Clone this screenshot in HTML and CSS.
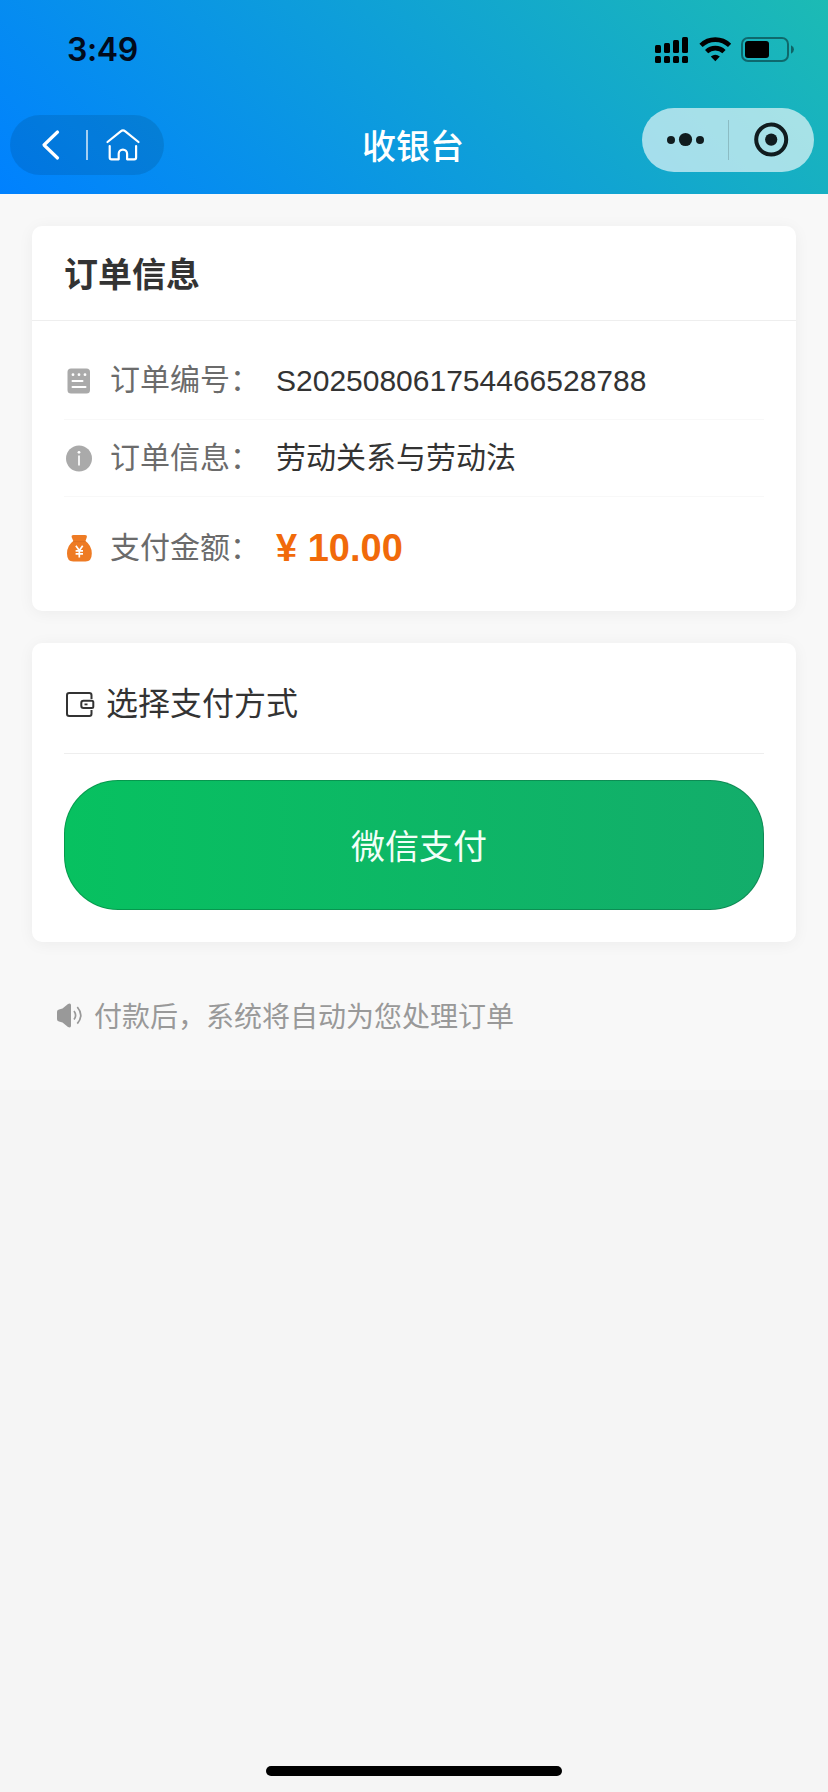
FILE: index.html
```html
<!DOCTYPE html>
<html lang="zh-CN">
<head>
<meta charset="utf-8">
<title>收银台</title>
<link rel="stylesheet" href="styles.css">
</head>
<body>
<div class="screen">
  <header class="header">
    <div class="status">
      <span class="time">3:49</span>
      <svg class="indicators" width="142" height="30" viewBox="0 0 142 30">
        <g>
          <rect x="1" y="11" width="6" height="8" rx="1.5"/><rect x="10" y="9" width="6" height="10" rx="1.5"/><rect x="19" y="6" width="6" height="13" rx="1.5"/><rect x="28" y="3" width="6" height="16" rx="1.5"/>
          <rect x="1" y="22" width="6" height="7" rx="1.5"/><rect x="10" y="22" width="6" height="7" rx="1.5"/><rect x="19" y="22" width="6" height="7" rx="1.5"/><rect x="28" y="22" width="6" height="7" rx="1.5"/>
        </g>
        <g fill="none" stroke="#000" stroke-width="4.6">
          <path d="M47 11.4a20.6 20.6 0 0 1 28.600 0"/>
          <path d="M52.600 17.600a12.600 12.600 0 0 1 17.400 0"/>
        </g>
        <path d="M56.800 22.600q4.500-3.600 9 0l-4.500 4.600z"/>
        <rect x="88" y="4" width="46" height="23" rx="6" fill="none" stroke="#000" stroke-opacity=".42" stroke-width="2"/>
        <rect x="91" y="7" width="24" height="17" rx="3"/>
        <path d="M137 11.300q3 1.500 3 4.200t-3 4.200z" fill-opacity=".45"/>
      </svg>
    </div>
    <nav class="nav">
      <div class="back-capsule">
        <svg width="154" height="60" viewBox="0 0 154 60" fill="none" stroke="#fff" stroke-linecap="round" stroke-linejoin="round">
          <path d="M47.500 17 34 30l13.500 13" stroke-width="3.200"/>
          <path d="M77 15v30" stroke-width="1.600" stroke-linecap="butt" stroke-opacity=".8"/>
          <path d="M97.500 27 110.700 16.300q2.300-1.900 4.600 0L128.500 27M99.700 31v11.500q0 1.800 1.800 1.800h7.200v-5.500a4.200 4.200 0 0 1 8.400 0v5.500h7.200q1.800 0 1.800-1.800V31" stroke-width="2.200"/>
        </svg>
      </div>
      <h1 class="page-title">收银台</h1>
      <div class="menu-capsule">
        <svg width="172" height="64" viewBox="0 0 172 64" fill="#101c1f">
          <circle cx="29" cy="32" r="4"/><circle cx="43.500" cy="31.500" r="6.600"/><circle cx="58" cy="32" r="4"/>
          <path d="M86.500 12v40" stroke="#000" stroke-opacity=".16" stroke-width="1"/>
          <circle cx="129.200" cy="31.600" r="15" fill="none" stroke="#101c1f" stroke-width="4"/>
          <circle cx="129.200" cy="31.600" r="6.100"/>
        </svg>
      </div>
    </nav>
  </header>

  <main class="content">
    <section class="card">
      <h2 class="card-title">订单信息</h2>
      <div class="rows">
        <div class="row">
          <svg class="icon" width="28" height="30" viewBox="0 0 28 30">
            <rect x="3.500" y="3.500" width="22.500" height="25" rx="3.500" fill="#aaa"/>
            <g fill="#fff"><circle cx="9" cy="9.700" r="1.400"/><circle cx="15" cy="9.700" r="1.400"/><circle cx="21" cy="9.700" r="1.400"/></g>
            <path d="M8.500 16h10M8.500 22h13" stroke="#fff" stroke-width="2" stroke-linecap="round"/>
          </svg>
          <span class="label">订单编号：</span><span class="value number">S202508061754466528788</span>
        </div>
        <div class="row">
          <svg class="icon" width="28" height="30" viewBox="0 0 28 30">
            <circle cx="15" cy="15.500" r="13" fill="#aaa"/>
            <circle cx="15" cy="9.300" r="1.400" fill="#fff"/>
            <path d="M15 12.500v10" stroke="#fff" stroke-width="1.700"/>
          </svg>
          <span class="label">订单信息：</span><span class="value">劳动关系与劳动法</span>
        </div>
        <div class="row row-amount">
          <svg class="icon" width="28" height="30" viewBox="0 0 28 30">
            <path d="M9.500 2h11.500q2.300 0 1.800 2.300L21.500 8q6.300 4.500 6.300 12.500 0 8-6.300 8H9.300q-6.300 0-6.300-8Q3 12.500 9.300 8L7.700 4.300Q7.200 2 9.500 2z" fill="#ee7b24"/>
            <path d="M9.300 8.600h12.200" stroke="#d96f22" stroke-width=".8"/>
            <path d="m11.900 12.800 3.400 4.700 3.400-4.700M15.300 17.500V24.500M11.600 17.900h7.400M11.600 20.900h7.400" fill="none" stroke="#fff" stroke-width="1.700"/>
          </svg>
          <span class="label">支付金额：</span><span class="amount">¥ 10.00</span>
        </div>
      </div>
    </section>

    <section class="card pay-card">
      <div class="pay-heading">
        <svg width="32" height="30" viewBox="0 0 32 30" fill="none" stroke="#333" stroke-width="2" stroke-linejoin="round">
          <path d="M27.500 10V6.200Q27.500 4 25.300 4H5.200Q3 4 3 6.200v18.600Q3 27 5.200 27h20.100q2.200 0 2.200-2.200V21"/>
          <path d="M19.500 11.800h8.300q1.500 0 1.500 1.500v4.200q0 1.500-1.500 1.500h-8.300q-2.200 0-2.200-2.200v-2.800q0-2.200 2.200-2.200z"/>
          <path d="M20.500 15.400h3" stroke-width="1.800"/>
        </svg>
        <span>选择支付方式</span>
      </div>
      <button class="pay-button" type="button">微信支付</button>
    </section>

    <p class="notice">
      <svg width="28" height="28" viewBox="0 0 28 28">
        <path d="M2 10.800q0-1.800 2-2.300l3.500-1L13 3q3-1.300 3 1.200v20.600q0 2.500-3 1.200l-5.500-4.500-3.500-1q-2-.5-2-2.300z" fill="#999"/>
        <path d="M19 10q3.200 4.300 0 8.600M22.300 6q7 8.300 0 16.600" fill="none" stroke="#999" stroke-width="1.700"/>
      </svg>
      <span>付款后，系统将自动为您处理订单</span>
    </p>
  </main>
  <div class="home-indicator"></div>
</div>
</body>
</html>
```
FILE: styles.css
```css
* { box-sizing: border-box; }

body {
  margin: 0;
  background: #f5f5f5;
  color: #333;
  font-family: "Liberation Sans", "Noto Sans CJK SC", sans-serif;
}

.screen {
  display: flex;
  flex-direction: column;
  width: 828px;
  height: 1792px;
}

.header {
  height: 194px;
  background: linear-gradient(45deg, #0081ff, #1cbbb4);
}

.status {
  display: flex;
  justify-content: space-between;
  padding: 34px 32px 0 67px;
  height: 108px;
}

.time {
  color: #020b1c;
  font: 600 32px/32px Inter, sans-serif;
  letter-spacing: -.4px;
}

.nav {
  display: grid;
  grid-template-columns: 172px 1fr 172px;
  align-items: start;
  padding: 0 14px 0 10px;
}

.back-capsule {
  width: 154px;
  height: 60px;
  margin-top: 7px;
  border-radius: 30px;
  background: rgba(0, 0, 0, .1);
}

.page-title {
  margin: 14px 0 0;
  padding-left: 2px;
  color: #fff;
  font-size: 34px;
  font-weight: 500;
  line-height: 50px;
  text-align: center;
}

.menu-capsule {
  height: 64px;
  border-radius: 32px;
  background: rgba(255, 255, 255, .62);
}

svg { display: block; flex: none; }

.content {
  height: 896px;
  padding: 32px 32px 0;
  background: #f8f8f8;
}

.card {
  height: 385px;
  border-radius: 10px;
  background: #fff;
  box-shadow: 0 2px 16px rgba(0, 0, 0, .05);
}

.card-title {
  margin: 0;
  height: 95px;
  padding: 24px 32px 20px;
  border-bottom: 1px solid #eee;
  font-size: 34px;
  font-weight: 700;
  line-height: 50px;
}

.rows { padding: 21px 32px 0; }

.row {
  display: flex;
  align-items: center;
  height: 77.500px;
  border-bottom: 1px solid #f8f8f8;
  font-size: 30px;
  line-height: 44px;
}

.row-amount { height: 102px; border-bottom: 0; }
.icon { margin-right: 18px; }

.label {
  width: 166px;
  color: #6b6b6b;
  white-space: nowrap;
}

.number { padding-top: 2px; }

.amount {
  color: #f16a0a;
  font-size: 38px;
  font-weight: 700;
}

.pay-card {
  height: 299px;
  margin-top: 32px;
  padding: 16px 32px 32px;
}

.pay-heading {
  display: flex;
  align-items: center;
  gap: 10px;
  height: 95px;
  padding-bottom: 4px;
  border-bottom: 1px solid #eee;
  font-size: 32px;
  line-height: 48px;
}

.pay-button {
  display: block;
  width: 700px;
  height: 130px;
  margin-top: 26px;
  padding: 0 0 0 10px;
  border: 1px solid rgba(0, 0, 0, .2);
  border-radius: 54px;
  background: linear-gradient(90deg, #07c160, #13ad6b) border-box;
  color: #f2fff8;
  font: 400 34px/50px "Noto Sans CJK SC", sans-serif;
}

.notice {
  display: flex;
  align-items: center;
  gap: 11px;
  height: 42px;
  margin: 52px 0 0;
  padding-left: 23px;
  color: #999;
  font-size: 28px;
}

.home-indicator {
  width: 296px;
  height: 10px;
  margin: auto auto 16px;
  border-radius: 5px;
  background: #000;
}
```
